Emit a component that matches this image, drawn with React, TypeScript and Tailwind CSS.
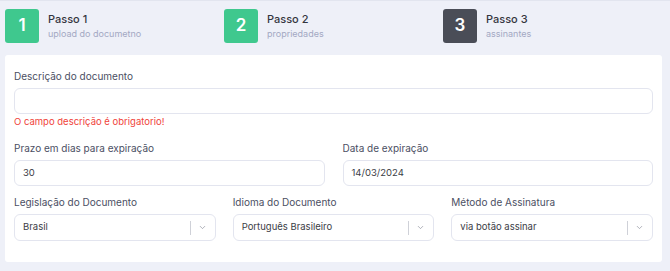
import { ChevronDown } from "lucide-react";

const font = { fontFamily: '"Inter", "Noto Sans", sans-serif' };

function Step({ n, title, sub, done }: { n: number; title: string; sub: string; done: boolean }) {
  return (
    <div className="flex flex-1 items-center gap-[9px]">
      <div
        className={`flex h-[34px] w-[34px] items-center justify-center rounded-[3px] text-[17px] font-semibold text-white ${
          done ? "bg-[#3fc88e]" : "bg-[#4a4d57]"
        }`}
      >
        {n}
      </div>
      <div className="flex flex-col pb-[1px]">
        <span className="text-[11px] font-medium leading-[15px] text-[#34363f]">{title}</span>
        <span className="text-[9px] leading-[13px] text-[#a3a8c3]">{sub}</span>
      </div>
    </div>
  );
}

function Label({ children }: { children: string }) {
  return <div className="mb-[5px] text-[10px] leading-[14px] text-[#4b4f63]">{children}</div>;
}

function Input({ value }: { value?: string }) {
  return (
    <div className="flex h-[26px] items-center rounded-[6px] border border-[#e3e5ef] bg-white px-[8px] text-[9.5px] text-[#3b3d46]">
      {value}
    </div>
  );
}

function Select({ value }: { value: string }) {
  return (
    <div className="flex h-[27px] items-center rounded-[6px] border border-[#e3e5ef] bg-white pl-[8px] pr-[8px] text-[9.5px] text-[#3b3d46]">
      <span className="flex-1">{value}</span>
      <span className="h-[14px] w-px bg-[#cfd1d8]" />
      <ChevronDown className="ml-[7px] h-[9px] w-[9px] text-[#8a8d99]" strokeWidth={1.8} />
    </div>
  );
}

export default function App() {
  return (
    <div className="h-[271px] w-[670px] border-t border-[#e2e5ef] bg-[#eef0f8] pt-[8px]" style={font}>
      <div className="mx-[5px] mr-[8px] flex">
        <Step n={1} title="Passo 1" sub="upload do documetno" done />
        <Step n={2} title="Passo 2" sub="propriedades" done />
        <Step n={3} title="Passo 3" sub="assinantes" done={false} />
      </div>

      <div className="mx-[5px] mr-[8px] mt-[12px] h-[207px] rounded-[3px] bg-white px-[9px] pt-[14px]">
        <Label>Descrição do documento</Label>
        <Input />
        <div className="mt-[1px] text-[9.5px] leading-[14px] text-[#f0433a]">O campo descrição é obrigatorio!</div>

        <div className="mt-[12px] grid grid-cols-2 gap-[18px]">
          <div>
            <Label>Prazo em dias para expiração</Label>
            <Input value="30" />
          </div>
          <div>
            <Label>Data de expiração</Label>
            <Input value="14/03/2024" />
          </div>
        </div>

        <div className="mt-[9px] grid grid-cols-3 gap-[17px]">
          <div>
            <Label>Legislação do Documento</Label>
            <Select value="Brasil" />
          </div>
          <div>
            <Label>Idioma do Documento</Label>
            <Select value="Português Brasileiro" />
          </div>
          <div>
            <Label>Método de Assinatura</Label>
            <Select value="via botão assinar" />
          </div>
        </div>
      </div>
    </div>
  );
}
